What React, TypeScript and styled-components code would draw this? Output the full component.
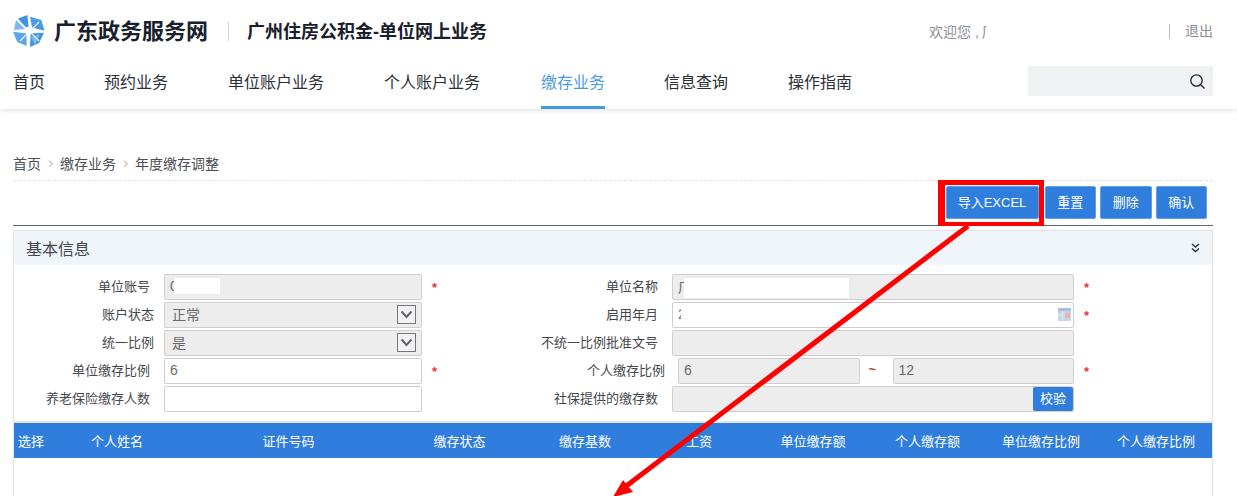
import React from 'react';

import styled, { createGlobalStyle } from 'styled-components';

const FONT = `"Liberation Sans", "Noto Sans CJK SC", sans-serif`;
const BLUE = '#2f7edd';

const GlobalStyle = createGlobalStyle`
  html, body {
    margin: 0;
    padding: 0;
    background: #fff;
    font-family: ${FONT};
  }
  * {
    box-sizing: border-box;
  }
`;

const Page = styled.div`
  position: relative;
  width: 1237px;
  height: 496px;
  overflow: hidden;
  background: #fff;
`;

const Header = styled.header`
  height: 109px;
  padding: 0 24px 0 13px;
  background: #fff;
  box-shadow: 0 1px 5px rgba(60, 70, 90, 0.18);
`;

const TopBar = styled.div`
  display: flex;
  align-items: center;
  height: 62px;
`;

const LogoName = styled.div`
  margin: 0 0 4px 8px;
  width: 154px;
  font-size: 22px;
  font-weight: 700;
  color: #17202c;
  white-space: nowrap;
`;

const SiteName = styled.div`
  margin-left: 20px;
  padding-left: 18px;
  border-left: 1px solid #d5d5d5;
  height: 19px;
  line-height: 20px;
  font-size: 18px;
  font-weight: 700;
  color: #17202c;
  white-space: nowrap;
`;

const Welcome = styled.div`
  display: flex;
  margin-left: auto;
  width: 240px;
  font-size: 14px;
  color: #8a8f96;
`;

const ClippedName = styled.span`
  display: inline-block;
  width: 4px;
  margin-left: 3px;
  overflow: hidden;
`;

const Logout = styled.div`
  height: 15px;
  line-height: 15px;
  padding-left: 15px;
  border-left: 1px solid #bbb;
  font-size: 14px;
  color: #8a8f96;
`;

const NavBar = styled.nav`
  display: flex;
  align-items: flex-start;
`;

const NavItem = styled.div<{ $active?: boolean }>`
  height: 47px;
  padding-top: 9px;
  margin-left: ${(p) => (p.$active ? '1px' : '0')};
  margin-right: ${(p) => (p.$active ? '59px' : '60px')};
  font-size: 16px;
  line-height: 24px;
  white-space: nowrap;
  color: ${(p) => (p.$active ? '#4b9be3' : '#2a2f36')};
  border-bottom: 3px solid ${(p) => (p.$active ? '#4398e2' : 'transparent')};
  &:first-child {
    margin-right: 59px;
  }
`;

const SearchBox = styled.div`
  display: flex;
  align-items: center;
  justify-content: flex-end;
  width: 185px;
  height: 30px;
  margin: 4px 0 0 auto;
  padding-right: 7px;
  background: #f0f1f3;
  color: #1c2733;
`;

const Content = styled.main`
  padding: 42px 24px 0 13px;
`;

const Breadcrumb = styled.div`
  display: flex;
  align-items: center;
  height: 30px;
  padding-bottom: 5px;
  border-bottom: 1px dashed #e2e2e2;
  font-size: 14px;
  color: #4b4f55;
`;

const CrumbSep = styled.span`
  display: inline-flex;
  width: 19px;
  justify-content: center;
  font-size: 17px;
  color: #c4c4c4;
`;

const Toolbar = styled.div`
  display: flex;
  justify-content: flex-end;
  gap: 4px;
  height: 45px;
  padding: 5px 6px 0 0;
  border-bottom: 1px solid #666;
`;

const ActionButton = styled.button<{ $wide?: boolean }>`
  width: ${(p) => (p.$wide ? '93px' : '51.5px')};
  height: 33px;
  margin-right: ${(p) => (p.$wide ? '2px' : '0')};
  padding: 0 0 3px;
  border: 1px solid #5f9fe6;
  border-radius: 2px;
  background: ${BLUE};
  color: #fff;
  font-family: ${FONT};
  font-size: 13px;
  white-space: nowrap;
`;

const Panel = styled.section`
  margin-top: 4px;
  border: 1px solid #dfe3e5;
  border-bottom: 0;
  height: 270px;
`;

const PanelHead = styled.div`
  display: flex;
  align-items: center;
  justify-content: space-between;
  height: 34px;
  padding: 0 12px;
  background: #f0f5f9;
  font-size: 16px;
  color: #43474d;
`;

const Form = styled.div`
  display: grid;
  grid-template-columns: 150px 258px 108px 142px 402px 1fr;
  grid-auto-rows: 26px;
  row-gap: 2px;
  padding: 9px 0;
  border-bottom: 2px solid #e2e5e6;
  height: 158px;
`;

const Label = styled.div<{ $shift?: number }>`
  display: flex;
  align-items: center;
  justify-content: flex-end;
  padding: 0 ${(p) => 14 - (p.$shift ?? 0)}px 4px 0;
  font-size: 13px;
  color: #44484d;
  white-space: nowrap;
`;

const Field = styled.div<{ $disabled?: boolean }>`
  position: relative;
  display: flex;
  align-items: center;
  height: 26px;
  padding: 0 0 3px 5px;
  border: 1px solid #cfcfcf;
  border-radius: 2px;
  background: ${(p) => (p.$disabled ? '#ededed' : '#fff')};
  font-size: 14px;
  color: #6a6a6a;
`;

const SelectField = styled(Field)`
  padding-left: 7px;
`;

const Redacted = styled.span<{ $left: number; $width: number; $height: number }>`
  position: absolute;
  top: 3px;
  left: ${(p) => p.$left}px;
  width: ${(p) => p.$width}px;
  height: ${(p) => p.$height}px;
  background: #fff;
`;

const SelectArrow = styled.span`
  position: absolute;
  top: 2px;
  right: 5px;
  display: flex;
  align-items: center;
  justify-content: center;
  width: 19px;
  height: 19px;
  border: 1px solid #777;
  background: #f2f2f2;
`;

const CalendarIcon = styled.svg`
  position: absolute;
  top: 5px;
  right: 2px;
`;

const Required = styled.div`
  display: flex;
  align-items: center;
  padding-left: 10px;
  font-size: 13px;
  font-weight: 700;
  color: #ee2f3a;
`;

const RangeCell = styled.div`
  display: flex;
  align-items: center;
  padding-left: 6px;
`;

const RangeField = styled(Field)`
  flex: 1;
`;

const RangeDash = styled.span`
  width: 33px;
  padding: 0 0 3px 9px;
  font-size: 13px;
  font-weight: 700;
  color: #b8443a;
`;

const CheckButton = styled.button`
  position: absolute;
  top: 0;
  right: 0;
  width: 40px;
  height: 24px;
  padding: 0 0 3px;
  border: 0;
  border-radius: 2px;
  background: ${BLUE};
  color: #fff;
  font-family: ${FONT};
  font-size: 13px;
`;

const TableHead = styled.div`
  display: grid;
  grid-template-columns: 46px 114px 229px 113px 138px 90px 138px 91px 136px 94px;
  align-items: center;
  height: 35px;
  background: ${BLUE};
  color: #fff;
  font-size: 13px;
`;

const HeadCell = styled.div`
  text-align: center;
  white-space: nowrap;
`;

const FirstHeadCell = styled(HeadCell)`
  text-align: left;
  padding-left: 4px;
`;

const Highlight = styled.div`
  position: absolute;
  left: 938px;
  top: 180px;
  width: 106px;
  height: 46px;
  border: solid #ff0000;
  border-width: 5px 5px 4px 7px;
`;

const Arrow = styled.svg`
  position: absolute;
  left: 0;
  top: 0;
  pointer-events: none;
`;

const navItems = ['首页', '预约业务', '单位账户业务', '个人账户业务', '缴存业务', '信息查询', '操作指南'];
const columns = ['个人姓名', '证件号码', '缴存状态', '缴存基数', '工资', '单位缴存额', '个人缴存额', '单位缴存比例', '个人缴存比例'];

const Logo = () => (
  <svg width="33" height="33" viewBox="0 0 33 33">
    <path d="M5 3.5 L14.5 0 L15.5 12 L11.7 12 Z" fill="#3f93e2" />
    <path d="M17 1.7 L28.3 5 L31.5 15.7 L19 12.5 Z" fill="#4a9be6" />
    <path d="M17.7 18.5 L31 17.7 L26 28 L17 32 Z" fill="#3f93e2" />
    <path d="M0 16.7 L13.5 18.5 L13.5 31 L4.3 27 Z" fill="#5ba5ea" />
    <path d="M3 5 L12 14 L1 15 Z" fill="#7db8ee" />
    <path d="M27 19 L22 30 L18 22 Z" fill="#7db8ee" />
    <path d="M7 7 L26 26 M26 7 L7 26" stroke="#e6f2fc" strokeWidth="1.2" />
    <circle cx="16" cy="16" r="3" fill="#fff" />
  </svg>
);

const ChevronDown = () => (
  <svg width="13" height="9" viewBox="0 0 13 9">
    <path d="M1.5 1.5 L6.5 7 L11.5 1.5" fill="none" stroke="#5f6470" strokeWidth="2" />
  </svg>
);

const App: React.FC = () => (
  <Page>
    <GlobalStyle />
    <Header>
      <TopBar>
        <Logo />
        <LogoName>广东政务服务网</LogoName>
        <SiteName>广州住房公积金-单位网上业务</SiteName>
        <Welcome>
          欢迎您 ,<ClippedName>厂</ClippedName>
        </Welcome>
        <Logout>退出</Logout>
      </TopBar>
      <NavBar>
        {navItems.map((item) => (
          <NavItem key={item} $active={item === '缴存业务'}>
            {item}
          </NavItem>
        ))}
        <SearchBox>
          <svg width="17" height="17" viewBox="0 0 17 17">
            <circle cx="7.5" cy="7.5" r="5.7" fill="none" stroke="currentColor" strokeWidth="1.3" />
            <path d="M11.7 11.7 L15.5 15.5" stroke="currentColor" strokeWidth="1.3" />
          </svg>
        </SearchBox>
      </NavBar>
    </Header>
    <Content>
      <Breadcrumb>
        首页
        <CrumbSep>›</CrumbSep>
        缴存业务
        <CrumbSep>›</CrumbSep>
        年度缴存调整
      </Breadcrumb>
      <Toolbar>
        <ActionButton $wide>导入EXCEL</ActionButton>
        <ActionButton>重置</ActionButton>
        <ActionButton>删除</ActionButton>
        <ActionButton>确认</ActionButton>
      </Toolbar>
      <Panel>
        <PanelHead>
          基本信息
          <svg width="9" height="10" viewBox="0 0 9 10">
            <path d="M1 1 L4.5 4 L8 1 M1 5.5 L4.5 8.5 L8 5.5" fill="none" stroke="#333" strokeWidth="1.4" />
          </svg>
        </PanelHead>
        <Form>
          <Label>单位账号</Label>
          <Field $disabled>
            0<Redacted $left={9} $width={46} $height={16} />
          </Field>
          <Required>*</Required>
          <Label>单位名称</Label>
          <Field $disabled>
            广<Redacted $left={11} $width={165} $height={20} />
          </Field>
          <Required>*</Required>

          <Label $shift={4}>账户状态</Label>
          <SelectField $disabled>
            正常
            <SelectArrow>
              <ChevronDown />
            </SelectArrow>
          </SelectField>
          <div />
          <Label>启用年月</Label>
          <Field>
            2<Redacted $left={8} $width={40} $height={20} />
            <CalendarIcon width="13" height="13" viewBox="0 0 13 13">
              <rect width="13" height="13" fill="#c8d6ea" />
              <rect width="13" height="3" fill="#a9bedd" />
              <path d="M4.5 3 V13 M0 7 H13" stroke="#dfe7f2" />
              <rect x="7" y="5" width="5" height="5" fill="#e9b3aa" />
            </CalendarIcon>
          </Field>
          <Required>*</Required>

          <Label $shift={4}>统一比例</Label>
          <SelectField $disabled>
            是
            <SelectArrow>
              <ChevronDown />
            </SelectArrow>
          </SelectField>
          <div />
          <Label>不统一比例批准文号</Label>
          <Field $disabled />
          <div />

          <Label>单位缴存比例</Label>
          <Field>6</Field>
          <Required>*</Required>
          <Label $shift={7}>个人缴存比例</Label>
          <RangeCell>
            <RangeField $disabled>6</RangeField>
            <RangeDash>~</RangeDash>
            <RangeField $disabled>12</RangeField>
          </RangeCell>
          <Required>*</Required>

          <Label>养老保险缴存人数</Label>
          <Field />
          <div />
          <Label>社保提供的缴存数</Label>
          <Field $disabled>
            <CheckButton>校验</CheckButton>
          </Field>
          <div />
        </Form>
        <TableHead>
          <FirstHeadCell>选择</FirstHeadCell>
          {columns.map((col) => (
            <HeadCell key={col}>{col}</HeadCell>
          ))}
        </TableHead>
      </Panel>
    </Content>
    <Highlight />
    <Arrow width="1237" height="496" viewBox="0 0 1237 496">
      <path d="M968 226 L625 487" stroke="#ff0000" strokeWidth="5" fill="none" />
      <path d="M613 497 L623 480 L633 492 Z" fill="#ff0000" />
    </Arrow>
  </Page>
);

export default App;
